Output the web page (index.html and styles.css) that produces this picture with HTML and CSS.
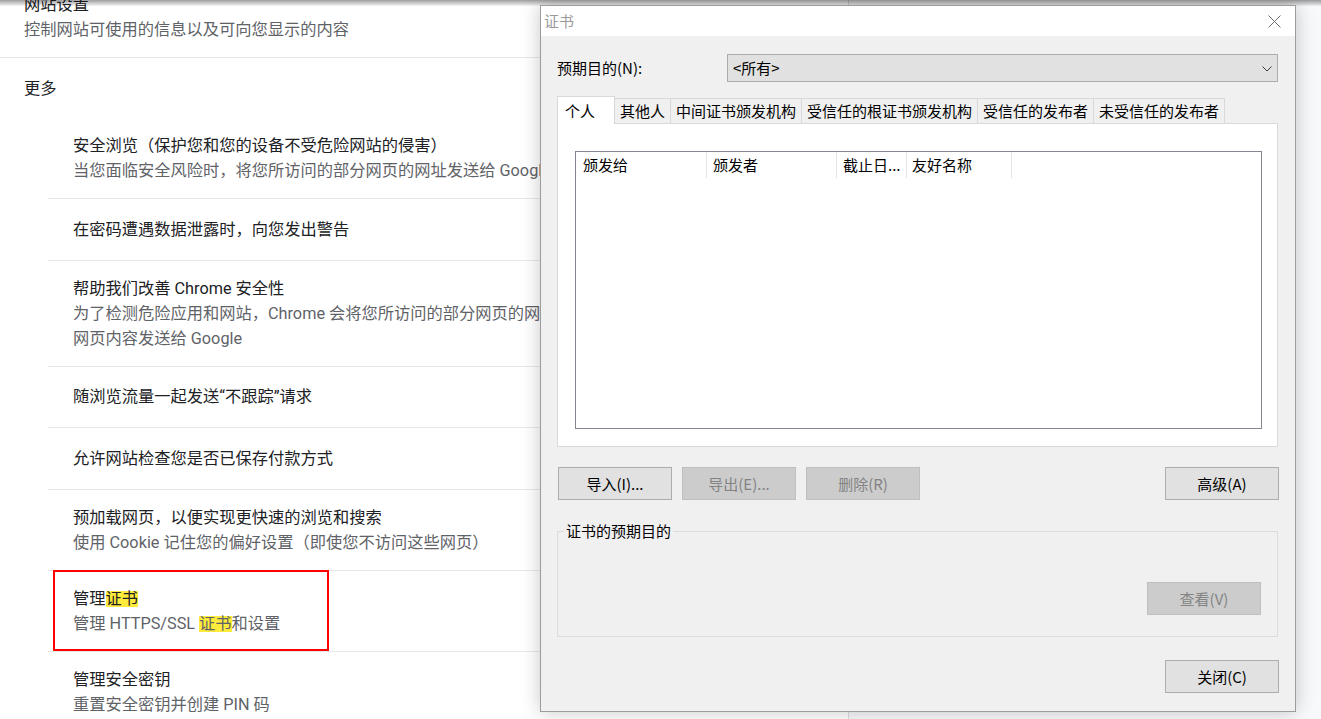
FILE: index.html
```html
<!DOCTYPE html>
<html lang="zh-CN">
<head>
<meta charset="utf-8">
<title>设置 - 隐私设置和安全性</title>
<link rel="stylesheet" href="styles.css">
</head>
<body>
<div class="page">
  <main class="settings-card">
    <div class="settings-inner">
      <div class="row">
        <div class="title">网站设置</div>
        <div class="sub">控制网站可使用的信息以及可向您显示的内容</div>
      </div>
      <div class="section-head"><div class="title">更多</div></div>
      <div class="sub-list">
        <div class="item first">
          <div class="title">安全浏览（保护您和您的设备不受危险网站的侵害）</div>
          <div class="sub">当您面临安全风险时，将您所访问的部分网页的网址发送给 Google</div>
        </div>
        <div class="item">
          <div class="title">在密码遭遇数据泄露时，向您发出警告</div>
        </div>
        <div class="item">
          <div class="title">帮助我们改善 Chrome 安全性</div>
          <div class="sub">为了检测危险应用和网站，Chrome 会将您所访问的部分网页的网址、有限的系统信息以及部分<br>网页内容发送给 Google</div>
        </div>
        <div class="item">
          <div class="title">随浏览流量一起发送“不跟踪”请求</div>
        </div>
        <div class="item">
          <div class="title">允许网站检查您是否已保存付款方式</div>
        </div>
        <div class="item">
          <div class="title">预加载网页，以便实现更快速的浏览和搜索</div>
          <div class="sub">使用 Cookie 记住您的偏好设置（即使您不访问这些网页）</div>
        </div>
        <div class="item">
          <div class="title">管理<span class="hl">证书</span></div>
          <div class="sub">管理 HTTPS/SSL <span class="hl">证书</span>和设置</div>
          <div class="mark"></div>
        </div>
        <div class="item">
          <div class="title">管理安全密钥</div>
          <div class="sub">重置安全密钥并创建 PIN 码</div>
        </div>
      </div>
    </div>
  </main>
  <div class="page-rest"></div>
</div>

<div class="top-shade"></div>

<section class="dialog">
  <header class="titlebar">
    <span class="caption">证书</span>
    <svg class="close" width="13" height="13" viewBox="0 0 13 13">
      <path d="M0.5 0.5 L12.5 12.5 M12.5 0.5 L0.5 12.5" stroke="#6f6f6f" stroke-width="1" fill="none"/>
    </svg>
  </header>
  <div class="dlg-body">
    <div class="purpose">
      <label class="purpose-label">预期目的(N):</label>
      <div class="select">
        <span>&lt;所有&gt;</span>
        <svg width="10" height="6" viewBox="0 0 10 6">
          <polyline points="0.5,0.5 5,5 9.5,0.5" stroke="#3c3c3c" stroke-width="1" fill="none"/>
        </svg>
      </div>
    </div>

    <div class="tabs">
      <div class="tab active">个人</div>
      <div class="tab">其他人</div>
      <div class="tab">中间证书颁发机构</div>
      <div class="tab">受信任的根证书颁发机构</div>
      <div class="tab">受信任的发布者</div>
      <div class="tab">未受信任的发布者</div>
    </div>
    <div class="panel">
      <div class="listview">
        <div class="lv-head">
          <div class="lv-col c1">颁发给</div>
          <div class="lv-col c2">颁发者</div>
          <div class="lv-col c3">截止日...</div>
          <div class="lv-col c4">友好名称</div>
        </div>
      </div>
    </div>

    <div class="actions">
      <button class="btn first">导入(I)...</button>
      <button class="btn" disabled>导出(E)...</button>
      <button class="btn" disabled>删除(R)</button>
      <button class="btn push">高级(A)</button>
    </div>

    <fieldset class="group">
      <legend>证书的预期目的</legend>
      <button class="btn" disabled>查看(V)</button>
    </fieldset>

    <div class="footer">
      <button class="btn">关闭(C)</button>
    </div>
  </div>
</section>
</body>
</html>
```

FILE: styles.css
```css
* {
  box-sizing: border-box;
}

html,
body {
  margin: 0;
  height: 100%;
}

body {
  position: relative;
  overflow: hidden;
  background: #f8f9fa;
  font-family: Roboto, "Noto Sans CJK SC", sans-serif;
}

/* ---------- settings page ---------- */

.page {
  display: flex;
  height: 719px;
}

.settings-card {
  width: 849px;
  background: #fff;
  border-right: 1px solid #dadce0;
  overflow: hidden;
}

.page-rest {
  flex: 1;
  background: #f8f9fa;
}

.settings-inner {
  margin-top: -23px;
}

.title,
.sub {
  font-size: 16.25px;
  line-height: 25px;
  white-space: nowrap;
}

.title {
  color: #202124;
}

.sub {
  color: #5f6368;
}

.row {
  padding: 15px 24px;
  border-bottom: 1px solid #e8e8e8;
}

.section-head {
  height: 60px;
  padding: 0 24px;
  display: flex;
  align-items: center;
}

.sub-list {
  margin-left: 48px;
}

.item {
  position: relative;
  min-height: 61.6px;
  padding: 15px 24px 15px 25px;
  border-top: 1px solid #e8e8e8;
  display: flex;
  flex-direction: column;
  justify-content: center;
}

.item.first {
  border-top: none;
}

.hl {
  display: inline-block;
  line-height: 16px;
  background: #ffeb3b;
}

.mark {
  position: absolute;
  left: 5px;
  top: -1px;
  width: 276px;
  height: 81px;
  border: 2px solid #ff0000;
}

.top-shade {
  position: absolute;
  left: 0;
  top: 0;
  right: 0;
  height: 6px;
  background: linear-gradient(rgba(0, 0, 0, 0.38), rgba(0, 0, 0, 0.04));
  pointer-events: none;
}

/* ---------- certificate dialog ---------- */

.dialog {
  position: absolute;
  left: 540px;
  top: 5px;
  width: 756px;
  height: 707px;
  border: 1px solid #9c9c9c;
  background: #f0f0f0;
  box-shadow: 0 0 18px rgba(0, 0, 0, 0.22);
  display: flex;
  flex-direction: column;
  font-family: "Noto Sans CJK SC", sans-serif;
  font-size: 15px;
  color: #000;
}

.titlebar {
  height: 30px;
  flex: none;
  background: #fff;
  display: flex;
  align-items: center;
  justify-content: space-between;
  padding: 0 14px 0 3px;
}

.caption {
  color: #9a9a9a;
  font-size: 15px;
  line-height: 20px;
}

.close {
  display: block;
  margin-top: 1px;
}

.dlg-body {
  flex: 1;
  display: flex;
  flex-direction: column;
  padding: 18px 17px 0 16px;
}

.purpose {
  display: flex;
  align-items: center;
  height: 28px;
}

.purpose-label {
  width: 170px;
  flex: none;
  line-height: 20px;
}

.select {
  flex: 1;
  height: 28px;
  border: 1px solid #adadad;
  background: #e1e1e1;
  display: flex;
  align-items: center;
  justify-content: space-between;
  padding: 0 5px 0 5px;
  line-height: 20px;
}

.select svg {
  display: block;
  margin-top: 1px;
}

/* tabs */

.tabs {
  position: relative;
  z-index: 1;
  display: flex;
  align-items: flex-end;
  height: 27px;
  margin-top: 14px;
}

.tab {
  height: 25px;
  padding: 0 5px;
  margin-left: -1px;
  border: 1px solid #d9d9d9;
  border-bottom: none;
  background: #f0f0f0;
  display: flex;
  align-items: center;
  white-space: nowrap;
  line-height: 20px;
}

.tab.active {
  width: 58px;
  height: 28px;
  margin-left: 0;
  margin-bottom: -1px;
  padding-left: 7px;
  background: #fff;
}

.panel {
  height: 324px;
  flex: none;
  background: #fff;
  border: 1px solid #d9d9d9;
  padding: 27px 15px 17px 17px;
}

.listview {
  height: 278px;
  border: 1px solid #828790;
  background: #fff;
}

.lv-head {
  display: flex;
  height: 26px;
}

.lv-col {
  border-right: 1px solid #e5e5e5;
  padding-left: 6px;
  line-height: 26px;
  white-space: nowrap;
  overflow: hidden;
}

.lv-col.c1 {
  width: 131px;
  padding-left: 7px;
}

.lv-col.c2 {
  width: 130px;
}

.lv-col.c3 {
  width: 70px;
}

.lv-col.c4 {
  width: 105px;
  padding-left: 5px;
}

/* buttons */

.btn {
  width: 114px;
  height: 33px;
  padding: 0;
  border: 1px solid #adadad;
  background: #e1e1e1;
  color: #000;
  font: inherit;
  line-height: 20px;
  display: flex;
  align-items: center;
  justify-content: center;
}

.btn:disabled {
  background: #cccccc;
  border-color: #bfbfbf;
  color: #838383;
}

.actions {
  display: flex;
  gap: 10px;
  margin-top: 20px;
  padding-left: 1px;
}

.actions .push {
  margin-left: auto;
  margin-right: -1px;
}

.group {
  margin: 21px 0 0 0;
  min-width: 0;
  padding: 41px 16px 21px 6px;
  border: 1px solid #dcdcdc;
  display: flex;
  justify-content: flex-end;
}

.group legend {
  padding: 0 2px;
  line-height: 20px;
  font-size: 15px;
}

.footer {
  display: flex;
  justify-content: flex-end;
  margin-top: 23px;
  margin-right: -1px;
}
```
